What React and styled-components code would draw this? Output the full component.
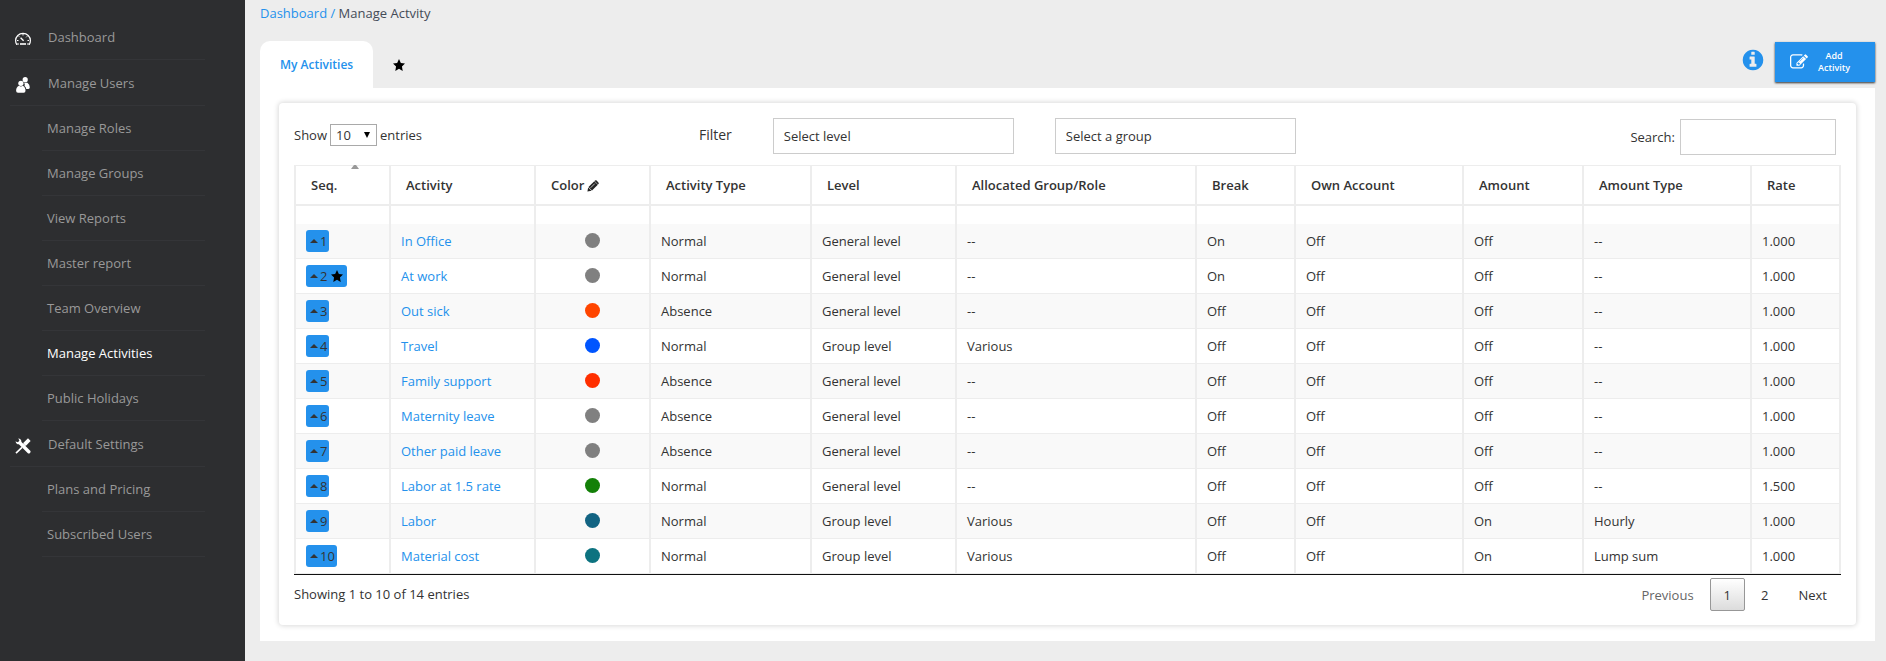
import React from 'react';
import styled, { createGlobalStyle, css } from 'styled-components';

const menu = [
  { label: 'Dashboard', icon: 'gauge' },
  { label: 'Manage Users', icon: 'users' },
  { label: 'Manage Roles' },
  { label: 'Manage Groups' },
  { label: 'View Reports' },
  { label: 'Master report' },
  { label: 'Team Overview' },
  { label: 'Manage Activities', active: true },
  { label: 'Public Holidays' },
  { label: 'Default Settings', icon: 'tools' },
  { label: 'Plans and Pricing' },
  { label: 'Subscribed Users' },
];

const columns = [
  { label: 'Seq.', width: 97 },
  { label: 'Activity', width: 145 },
  { label: 'Color', width: 115 },
  { label: 'Activity Type', width: 161 },
  { label: 'Level', width: 145 },
  { label: 'Allocated Group/Role', width: 240 },
  { label: 'Break', width: 99 },
  { label: 'Own Account', width: 168 },
  { label: 'Amount', width: 120 },
  { label: 'Amount Type', width: 168 },
  { label: 'Rate', width: 89 },
];

const activities = [
  ['In Office', '#808080', 'Normal', 'General level', '--', 'On', 'Off', 'Off', '--', '1.000'],
  ['At work', '#808080', 'Normal', 'General level', '--', 'On', 'Off', 'Off', '--', '1.000'],
  ['Out sick', '#ff4500', 'Absence', 'General level', '--', 'Off', 'Off', 'Off', '--', '1.000'],
  ['Travel', '#0055ff', 'Normal', 'Group level', 'Various', 'Off', 'Off', 'Off', '--', '1.000'],
  ['Family support', '#ff2f00', 'Absence', 'General level', '--', 'Off', 'Off', 'Off', '--', '1.000'],
  ['Maternity leave', '#808080', 'Absence', 'General level', '--', 'Off', 'Off', 'Off', '--', '1.000'],
  ['Other paid leave', '#808080', 'Absence', 'General level', '--', 'Off', 'Off', 'Off', '--', '1.000'],
  ['Labor at 1.5 rate', '#138008', 'Normal', 'General level', '--', 'Off', 'Off', 'Off', '--', '1.500'],
  ['Labor', '#136483', 'Normal', 'Group level', 'Various', 'Off', 'Off', 'On', 'Hourly', '1.000'],
  ['Material cost', '#0d7380', 'Normal', 'Group level', 'Various', 'Off', 'Off', 'On', 'Lump sum', '1.000'],
];

const defaultSeq = 2;

const StarIcon = () => (
  <svg width="12" height="12" viewBox="0 0 24 24" fill="#000">
    <path d="M12 0l3.7 7.9 8.3 1.1-6.1 6 1.5 8.8L12 19.5 4.6 23.8 6.1 15 0 9l8.3-1.1z" />
  </svg>
);

const PencilIcon = () => (
  <svg width="12" height="12" viewBox="0 0 12 12" fill="#222">
    <path d="M0.4 11.6l0.8-4.200 3.400 3.400z" />
    <path d="M1.500 7L7.300 1.200l3.500 3.500L5 10.500z" />
    <path d="M8 0.600q0.800-0.800 1.600 0l1.800 1.800q0.800 0.800 0 1.600l-0.400 0.400-3.400-3.400z" />
    <path d="M3.600 7.800l4.200-4.200" stroke="#fff" strokeWidth="0.700" />
  </svg>
);

const InfoIcon = () => (
  <svg width="24" height="24" viewBox="0 0 1792 1792" fill="#2491ec">
    <path d="M1152 1376v-160q0-14-9-23t-23-9h-96v-512q0-14-9-23t-23-9h-320q-14 0-23 9t-9 23v160q0 14 9 23t23 9h96v320h-96q-14 0-23 9t-9 23v160q0 14 9 23t23 9h448q14 0 23-9t9-23zm-128-896v-160q0-14-9-23t-23-9h-192q-14 0-23 9t-9 23v160q0 14 9 23t23 9h192q14 0 23-9t9-23zm640 416q0 209-103 385.500t-279.500 279.500-385.500 103-385.500-103-279.500-279.500-103-385.500 103-385.500 279.500-279.500 385.500-103 385.500 103 279.500 279.500 103 385.500z" />
  </svg>
);

const EditIcon = () => (
  <svg width="18" height="18" viewBox="0 0 1792 1792" fill="#fff">
    <path d="M888 1184l116-116-152-152-116 116v56h96v96h56zm440-720q-16-16-33 1l-350 350q-17 17-1 33t33-1l350-350q17-17 1-33zm80 594v190q0 119-84.500 203.500t-203.500 84.500h-832q-119 0-203.500-84.500t-84.500-203.500v-832q0-119 84.500-203.500t203.500-84.500h832q63 0 117 25 15 7 18 23 3 17-9 29l-49 49q-14 14-32 8-23-6-45-6h-832q-66 0-113 47t-47 113v832q0 66 47 113t113 47h832q66 0 113-47t47-113v-126q0-13 9-22l64-64q15-15 35-7t20 29zm-96-738l288 288-672 672h-288v-288zm444 132l-92 92-288-288 92-92q28-28 68-28t68 28l152 152q28 28 28 68t-28 68z" />
  </svg>
);

const menuIcons = {
  gauge: (
    <svg width="16" height="16" viewBox="0 0 16 16" fill="none" stroke="#fff">
      <path d="M2.200 13.300H1.600Q0.600 11.700 0.600 9.600A7.400 7.200 0 0 1 15.400 9.600Q15.400 11.700 14.400 13.300H13.800" strokeWidth="1.200" />
      <path d="M5 13h6" strokeWidth="1.600" />
      <path d="M5.600 6.800l3 3" strokeWidth="1.400" />
      <path d="M8 3v1.500M2 9.500h1.500M12.500 9.500H14M12.200 5.300l-1 1M3.800 5.300l0.800 0.800M2 13h2M12 13h2" strokeWidth="1" />
    </svg>
  ),
  users: (
    <svg width="16" height="16" viewBox="0 0 16 16" fill="#fff">
      <circle cx="10.200" cy="2.700" r="2.600" />
      <path d="M9.200 5.700h3.200q2.400 1.500 2.400 4.600 0 1.700-1.300 1.700h-2.200q-0.300-2-1.800-3 0.800-1.600-0.300-3.300z" />
      <circle cx="5.900" cy="6.300" r="2.600" />
      <path d="M4 8.800q1.900 1.200 3.800 0 2.700 1.400 2.700 5 0 2-1.800 2H3q-1.900 0-1.900-2 0-3.600 2.900-5z" />
    </svg>
  ),
  tools: (
    <svg width="16" height="16" viewBox="0 0 16 16" fill="none" stroke="#fff">
      <path d="M5.300 5.300l8.500 8.500" strokeWidth="3.400" strokeLinecap="round" />
      <path d="M0.600 3.200Q0.800 6.300 4 6.300L6.400 4Q6.500 0.800 3.200 0.600L4.400 2.300 3.800 3.600 2.300 4.300z" fill="#fff" stroke="none" />
      <path d="M1 15.200l6-5.800" strokeWidth="1.600" />
      <path d="M9.600 6.300L14.300 1.700" strokeWidth="3.800" />
      <path d="M8.200 5.600l2.200 2.200" strokeWidth="1.200" />
    </svg>
  ),
};

function Sidebar() {
  return (
    <Nav>
      {menu.map((item) => (
        <MenuItem key={item.label} $top={Boolean(item.icon)}>
          {item.icon && <MenuIcon>{menuIcons[item.icon]}</MenuIcon>}
          <MenuLink href="#" $active={item.active}>{item.label}</MenuLink>
        </MenuItem>
      ))}
    </Nav>
  );
}

function Toolbar() {
  return (
    <ToolbarRow>
      <Length>
        Show
        <LengthBox>
          <LengthSelect aria-label="Entries per page" defaultValue="10">
            <option>10</option>
            <option>25</option>
            <option>50</option>
          </LengthSelect>
          <Caret viewBox="0 0 6 6"><path d="M0 0h6L3 6z" /></Caret>
        </LengthBox>
        entries
      </Length>
      <Filters>
        <FilterLabel>Filter</FilterLabel>
        <FilterSelect aria-label="Level">
          <option>Select level</option>
        </FilterSelect>
        <FilterSelect aria-label="Group">
          <option>Select a group</option>
        </FilterSelect>
      </Filters>
      <Search>
        Search:
        <SearchInput type="search" />
      </Search>
    </ToolbarRow>
  );
}

function ActivityTable() {
  return (
    <Table>
      <colgroup>
        {columns.map((col) => (
          <col key={col.label} style={{ width: `${(col.width / 1547) * 100}%` }} />
        ))}
      </colgroup>
      <thead>
        <tr>
          {columns.map((col) => (
            <Th key={col.label} scope="col">
              {col.label}
              {col.label === 'Color' && <PencilIcon />}
              {col.label === 'Seq.' && <SortArrow />}
            </Th>
          ))}
        </tr>
      </thead>
      <tbody>
        <SpacerRow>
          {columns.map((col) => <td key={col.label} />)}
        </SpacerRow>
        {activities.map(([name, color, ...rest], i) => (
          <Row key={name}>
            <td>
              <SeqButton type="button">
                <Up viewBox="0 0 8 4"><path d="M4 0l4 4H0z" /></Up>
                {i + 1}
                {i + 1 === defaultSeq && <SeqStar><StarIcon /></SeqStar>}
              </SeqButton>
            </td>
            <td><Link href="#">{name}</Link></td>
            <td><Dot $color={color} /></td>
            {rest.map((value, n) => <td key={n}>{value}</td>)}
          </Row>
        ))}
      </tbody>
    </Table>
  );
}

function App() {
  return (
    <>
      <GlobalStyle />
      <Page>
        <Sidebar />
        <Main>
          <Breadcrumb>
            <Link href="#">Dashboard /</Link> Manage Actvity
          </Breadcrumb>
          <Tabs>
            <Tab type="button" $active>My Activities</Tab>
            <Tab type="button" aria-label="Favourites"><StarIcon /></Tab>
            <Actions>
              <InfoButton type="button" aria-label="Info"><InfoIcon /></InfoButton>
              <AddButton type="button">
                <EditIcon />
                <span>Add<br />Activity</span>
              </AddButton>
            </Actions>
          </Tabs>
          <Panel>
            <Card>
              <Toolbar />
              <ActivityTable />
              <Footer>
                <span>Showing 1 to 10 of 14 entries</span>
                <Pager>
                  <PageButton type="button" $muted>Previous</PageButton>
                  <PageButton type="button" $current>1</PageButton>
                  <PageButton type="button">2</PageButton>
                  <PageButton type="button">Next</PageButton>
                </Pager>
              </Footer>
            </Card>
          </Panel>
        </Main>
      </Page>
    </>
  );
}

export default App;

const GlobalStyle = createGlobalStyle`
    *{
        box-sizing:border-box;
    }

    body{
        margin:0;
        background:#ededed;
        color:#333;
        font-family:"Open Sans", sans-serif;
        font-size:13px;
        line-height:18px;
    }

    button, select, input{
        font:inherit;
        color:inherit;
    }
`;

const Page = styled.div`
    display:flex;
    min-height:100vh;
`;

const Nav = styled.nav`
    flex:0 0 245px;
    padding:14px 40px 0 10px;
    background:#2d2e30;
`;

const MenuItem = styled.div`
    display:flex;
    align-items:center;
    height:${(props) => (props.$top ? '46px' : '45px')};
    margin-left:${(props) => (props.$top ? '0' : '32px')};
    padding-left:5px;
    border-bottom:1px solid #343538;
`;

const MenuIcon = styled.span`
    display:flex;
    width:33px;
    padding-top:4px;
`;

const MenuLink = styled.a`
    color:${(props) => (props.$active ? '#fff' : '#999')};
    text-decoration:none;
`;

const Main = styled.main`
    flex:1;
    min-width:0;
    padding:4px 11px 19px 15px;
`;

const Breadcrumb = styled.div`
    height:37px;
    color:#444b57;
`;

const Link = styled.a`
    color:#2491ec;
    text-decoration:none;
`;

const Tabs = styled.div`
    display:flex;
    height:47px;
`;

const Tab = styled.button`
    display:flex;
    align-items:center;
    padding:0 20px;
    border:0;
    border-radius:10px 10px 0 0;
    background:${(props) => (props.$active ? '#fff' : 'transparent')};
    color:#2491ec;
    font-size:12px;
    font-weight:600;
`;

const Actions = styled.div`
    display:flex;
    align-items:flex-start;
    gap:10px;
    margin-left:auto;
    padding-top:1px;
`;

const InfoButton = styled.button`
    display:flex;
    padding:6px 0 0;
    border:0;
    background:none;
`;

const AddButton = styled.button`
    display:flex;
    align-items:center;
    gap:10px;
    width:100px;
    height:40px;
    padding:0 15px;
    border:0;
    background:#2491ec;
    box-shadow:0 1px 2px rgba(0, 0, 0, 0.8);
    color:#fff;
    font-size:9px;
    font-weight:600;
    line-height:12px;
`;

const Panel = styled.section`
    padding:15px 19px 16px;
    background:#fff;
`;

const Card = styled.div`
    padding:15px 15px 14px;
    border-radius:4px;
    background:#fff;
    box-shadow:0 0 5px 1px rgba(0, 0, 0, 0.15);
`;

const ToolbarRow = styled.div`
    display:flex;
    align-items:flex-start;
    gap:4px;
    height:47px;
    padding-right:5px;
`;

const Length = styled.label`
    flex:0 0 26%;
    display:flex;
    align-items:center;
    gap:3px;
    height:34px;
`;

const LengthBox = styled.span`
    position:relative;
    display:flex;
`;

const LengthSelect = styled.select`
    appearance:none;
    width:47px;
    height:22px;
    padding:0 5px;
    border:1px solid #a9a9a9;
    border-radius:0;
    background:#fff;
`;

const Caret = styled.svg`
    position:absolute;
    top:8px;
    right:7px;
    width:6px;
    height:6px;
    pointer-events:none;
`;

const Filters = styled.div`
    display:flex;
    gap:41px;
`;

const FilterLabel = styled.span`
    font-size:14px;
    line-height:34px;
`;

const FilterSelect = styled.select`
    appearance:none;
    width:241px;
    height:36px;
    padding:0 10px;
    border:1px solid #ccc;
    border-radius:0;
    background:#fff;
`;

const Search = styled.label`
    display:flex;
    align-items:center;
    gap:5px;
    margin-left:auto;
    padding-top:1px;
`;

const SearchInput = styled.input`
    width:156px;
    height:36px;
    border:1px solid #ccc;
`;

const Table = styled.table`
    width:100%;
    table-layout:fixed;
    border-collapse:separate;
    border-spacing:0;
    border-bottom:1px solid #111;

    th, td{
        border-right:2px solid #ededed;
    }

    th:first-child, td:first-child{
        border-left:2px solid #ededed;
    }
`;

const Th = styled.th`
    position:relative;
    height:41px;
    padding:0 15px;
    border-top:1px solid #ededed;
    border-bottom:2px solid #ededed;
    font-weight:600;
    text-align:left;
    white-space:nowrap;

    svg{
        margin-left:3px;
        vertical-align:-2px;
    }
`;

const SortArrow = styled.span`
    position:absolute;
    top:-1px;
    right:30px;
    width:8px;
    border:solid transparent;
    border-width:0 3px 4px;
    border-bottom-color:#999;
`;

const SpacerRow = styled.tr`
    height:18px;

    td{
        padding:0;
    }
`;

const Row = styled.tr`
    height:35px;

    td{
        padding:0 10px;
        border-bottom:1px solid #ededed;
    }

    &:nth-child(even) td{
        background:#f9f9f9;
    }
`;

const SeqButton = styled.button`
    display:flex;
    align-items:center;
    gap:2px;
    height:22px;
    padding:0 2px 0 4px;
    border:0;
    border-radius:3px;
    background:#2491ec;
`;

const Up = styled.svg`
    width:8px;
    height:4px;
    fill:#333;
`;

const SeqStar = styled.span`
    display:flex;
    padding:0 2px;
`;

const Dot = styled.span`
    display:block;
    width:15px;
    height:15px;
    margin:0 auto 2px;
    border-radius:50%;
    background:${(props) => props.$color};
`;

const Footer = styled.div`
    display:flex;
    align-items:flex-start;
    justify-content:space-between;
    padding-top:3px;

    > span{
        line-height:32px;
    }
`;

const Pager = styled.div`
    display:flex;
    gap:2px;
`;

const PageButton = styled.button`
    height:33px;
    padding:0 13px;
    border:1px solid transparent;
    border-radius:2px;
    background:none;
    color:${(props) => (props.$muted ? '#666' : '#333')};

    ${(props) => props.$current && css`
        border-color:#979797;
        background:linear-gradient(#fff, #dcdcdc);
    `}
`;
